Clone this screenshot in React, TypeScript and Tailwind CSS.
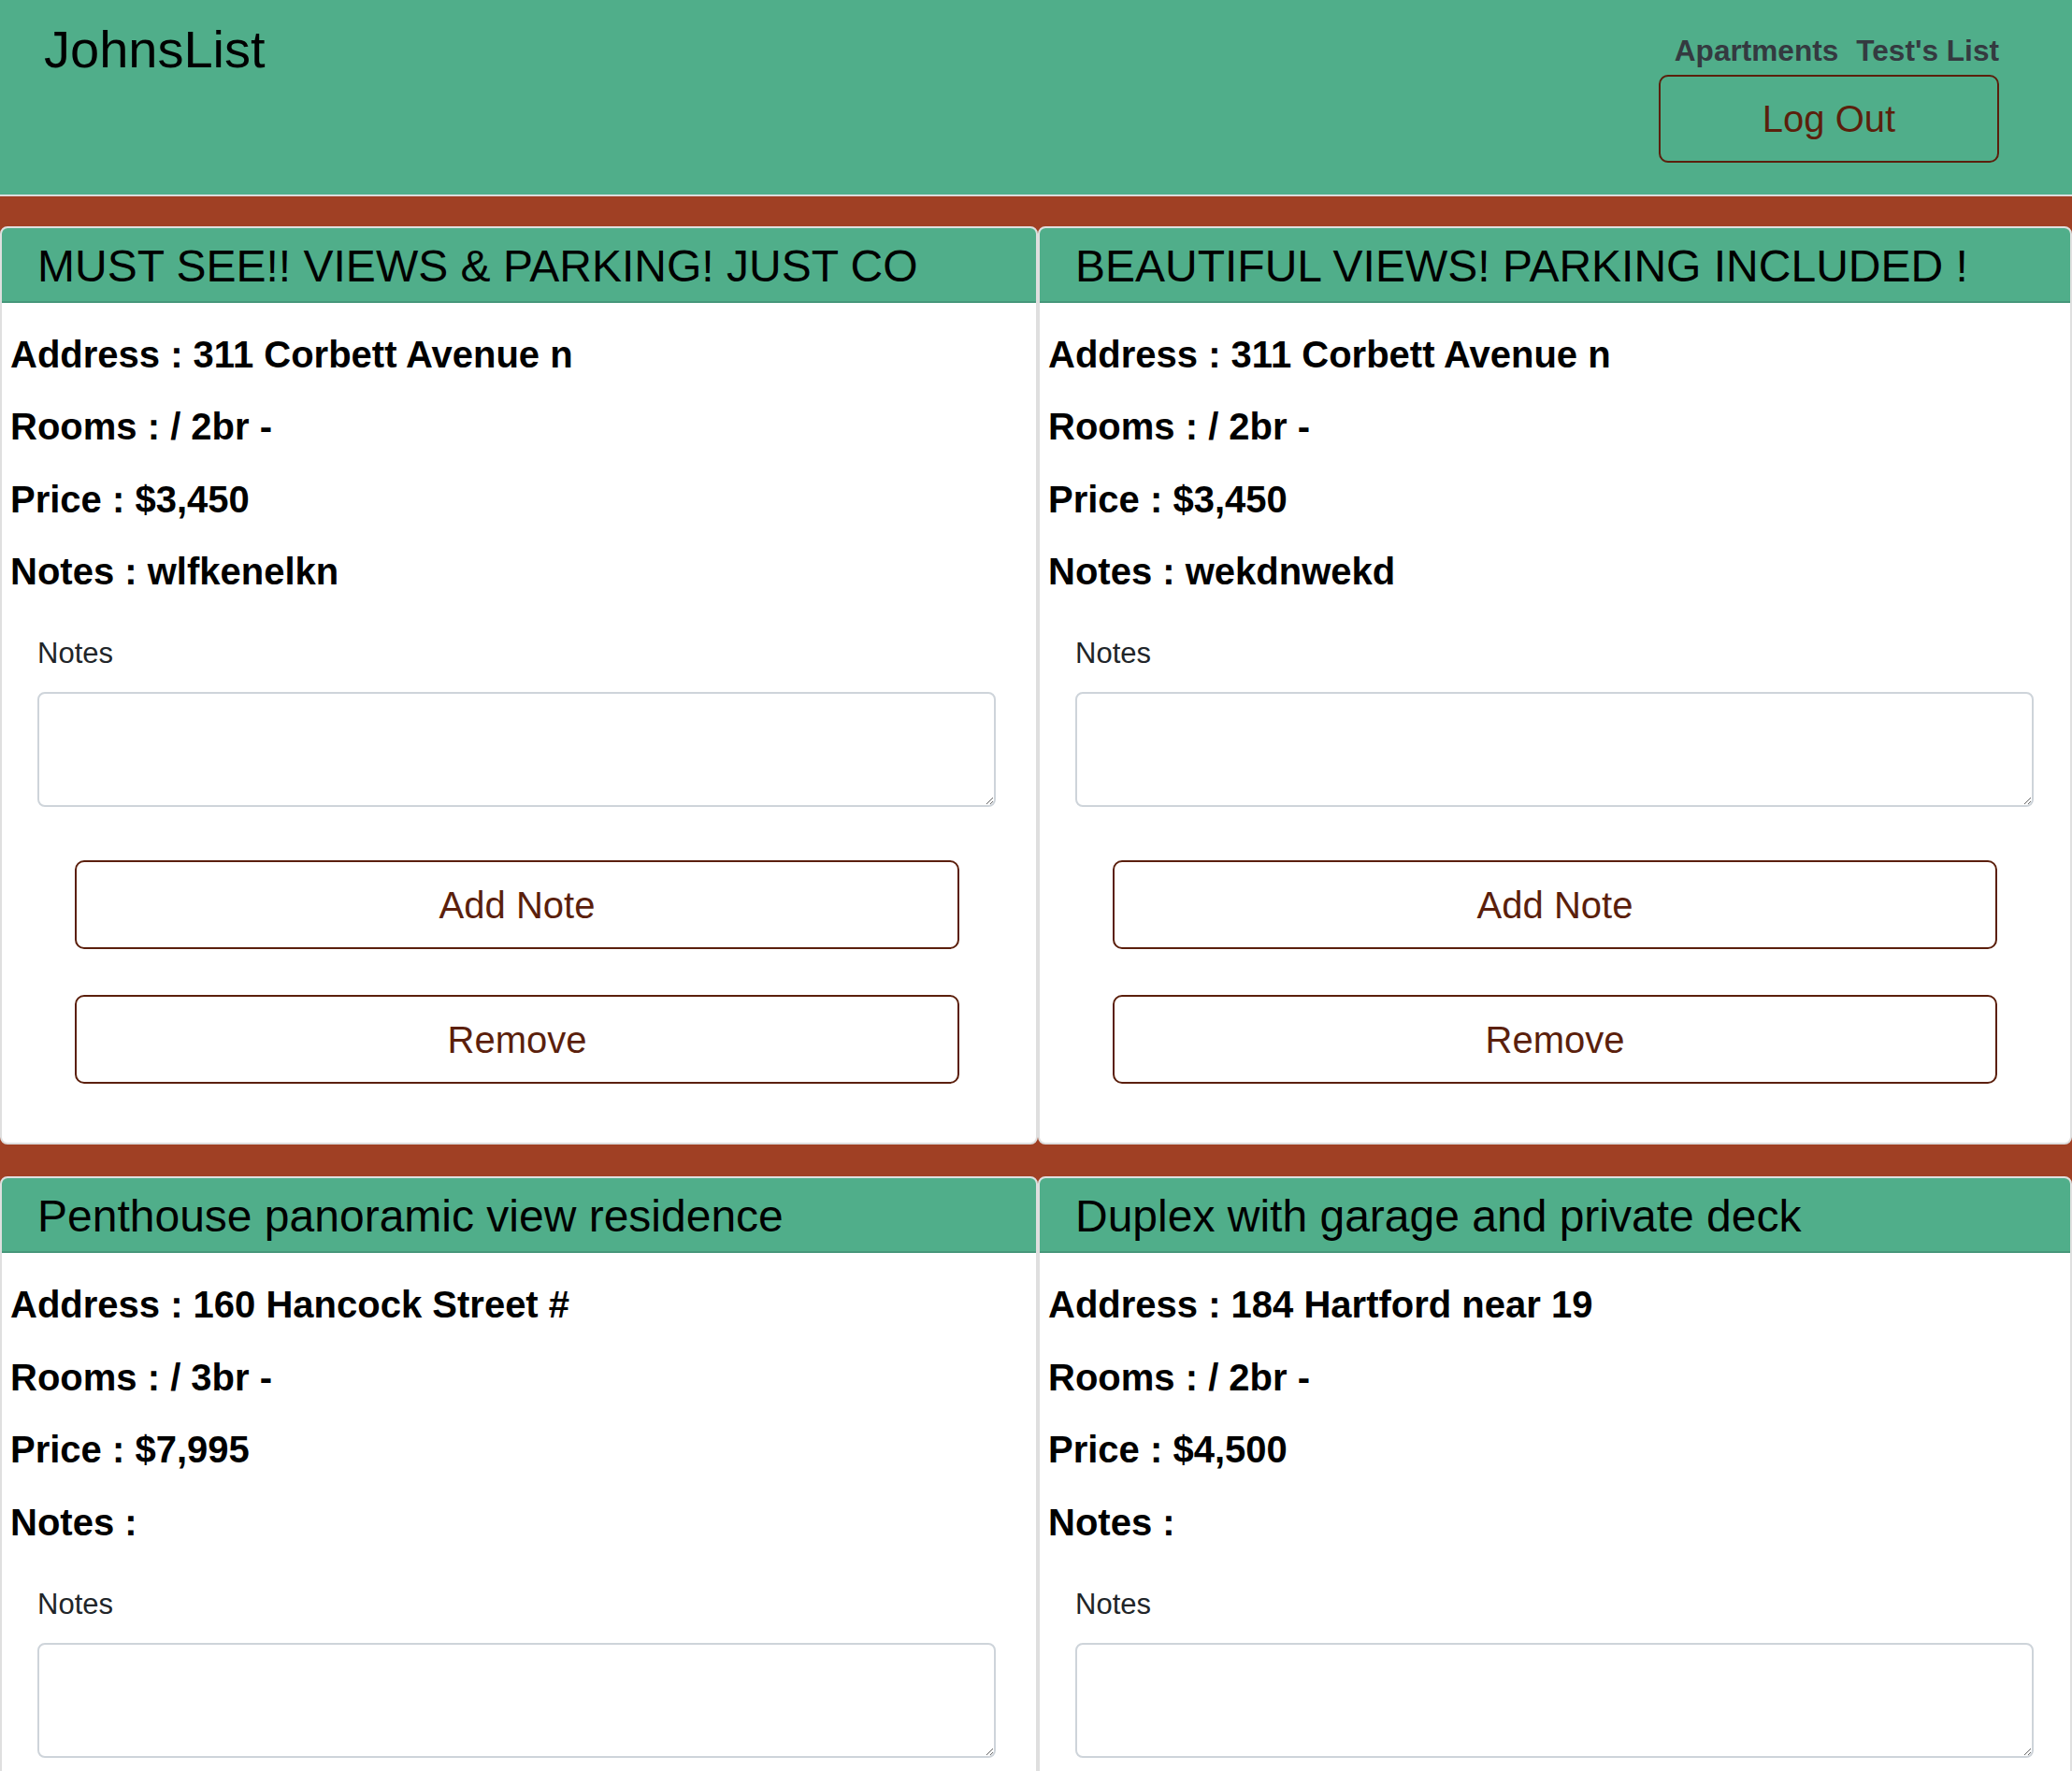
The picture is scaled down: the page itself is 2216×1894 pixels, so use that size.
import React from "react";

interface Listing {
  title: string;
  address: string;
  rooms: string;
  price: string;
  notes: string;
}

const listings: Listing[] = [
  {
    title: "MUST SEE!! VIEWS & PARKING! JUST CO",
    address: "311 Corbett Avenue n",
    rooms: "/ 2br -",
    price: "$3,450",
    notes: "wlfkenelkn",
  },
  {
    title: "BEAUTIFUL VIEWS! PARKING INCLUDED !",
    address: "311 Corbett Avenue n",
    rooms: "/ 2br -",
    price: "$3,450",
    notes: "wekdnwekd",
  },
  {
    title: "Penthouse panoramic view residence",
    address: "160 Hancock Street #",
    rooms: "/ 3br -",
    price: "$7,995",
    notes: "",
  },
  {
    title: "Duplex with garage and private deck",
    address: "184 Hartford near 19",
    rooms: "/ 2br -",
    price: "$4,500",
    notes: "",
  },
];

function ListingCard({ listing }: { listing: Listing }) {
  const fields = [
    ["Address", listing.address],
    ["Rooms", listing.rooms],
    ["Price", listing.price],
    ["Notes", listing.notes],
  ];

  return (
    <div className="flex flex-col rounded-[8px] border-2 border-[#dfdfdf] bg-white">
      {/* Card header */}
      <div className="rounded-t-[6px] border-b-2 border-[#46977a] bg-[#50ae8a] pt-[12px] pb-[8.4px] pl-[38px]">
        <h3 className="whitespace-nowrap text-[48px] leading-[57.6px] text-black">{listing.title}</h3>
      </div>

      {/* Card body */}
      <div className="flex flex-col pt-[31px] pb-[63px]">
        <div className="flex flex-col gap-[29.5px] pl-[9px]">
          {fields.map(([label, value]) => (
            <p key={label} className="text-[40px] font-bold leading-[48px] text-black">
              {label} : {value}
            </p>
          ))}
        </div>

        <div className="mt-[41px] flex flex-col pl-[38px]">
          <label className="text-[31px] leading-[46.5px] text-[#212529]">Notes</label>
          <textarea className="mt-[17.5px] h-[123px] w-[1025px] rounded-[8px] border-2 border-[#ced4da] bg-white" />
        </div>

        <div className="ml-[78px] flex w-[946px] flex-col">
          <button className="mt-[57px] h-[95px] rounded-[10px] border-2 border-[#5b1f0c] bg-white text-[40px] text-[#5b1f0c]">
            Add Note
          </button>
          <button className="mt-[49px] h-[95px] rounded-[10px] border-2 border-[#5b1f0c] bg-white text-[40px] text-[#5b1f0c]">
            Remove
          </button>
        </div>
      </div>
    </div>
  );
}

export default function App() {
  return (
    <div className="min-h-screen bg-[#a04024] font-['Liberation_Sans',Arial,sans-serif]">
      {/* Top bar */}
      <header className="flex h-[210px] justify-between border-b-2 border-[#dcdcdc] bg-[#50ae8a]">
        <h1 className="pt-[19px] pl-[47px] text-[56px] leading-[67.2px] text-black">JohnsList</h1>
        <div className="flex flex-col items-end pt-[31px] pr-[78px]">
          <nav className="flex gap-[19px] text-[31.6px] font-bold leading-[46px] text-[#343a40]">
            <span>Apartments</span>
            <span>Test's List</span>
          </nav>
          <button className="mt-[3px] h-[94px] w-[364px] rounded-[10px] border-2 border-[#5b1f0c] text-[40px] text-[#5b1f0c]">
            Log Out
          </button>
        </div>
      </header>

      {/* Listings */}
      <div className="mt-[32px] grid grid-cols-[1110px_1fr] gap-y-[34px]">
        {listings.map((listing, idx) => (
          <ListingCard key={idx} listing={listing} />
        ))}
      </div>
    </div>
  );
}
